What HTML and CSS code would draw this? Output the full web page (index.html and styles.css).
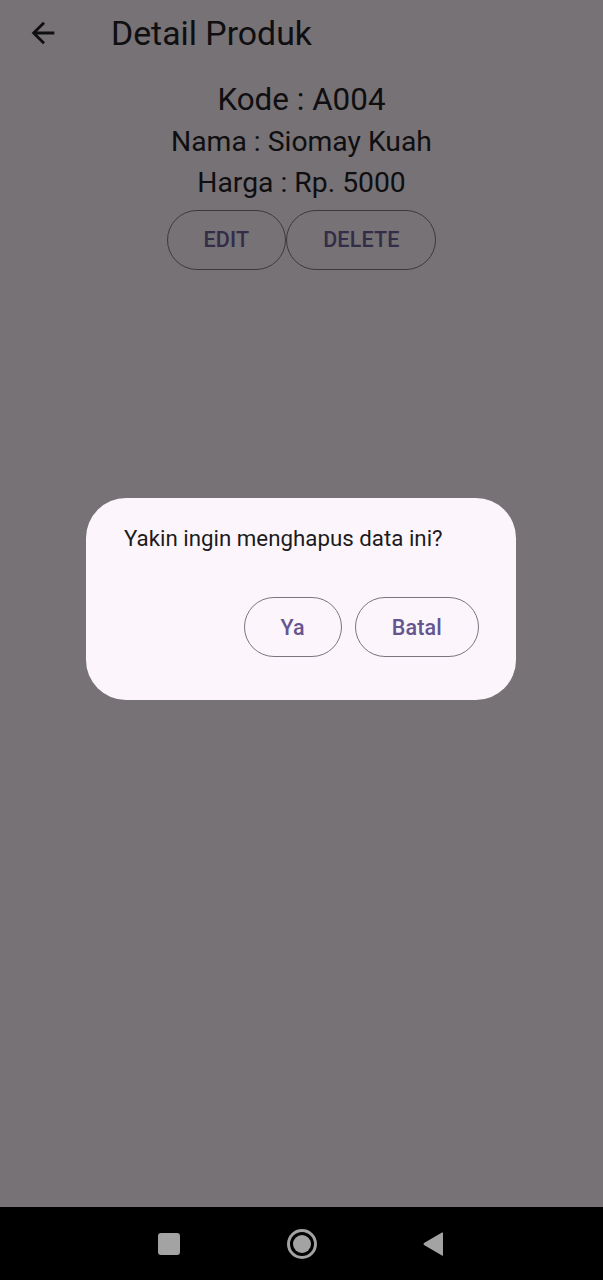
FILE: index.html
```html
<!DOCTYPE html>
<html>
<head>
<meta charset="utf-8">
<link rel="stylesheet" href="styles.css">
</head>
<body>
<div class="screen">
  <header class="appbar">
    <svg class="back" width="34" height="34" viewBox="0 0 24 24"><path d="M20 11H7.83l5.59-5.59L12 4l-8 8 8 8 1.41-1.41L7.83 13H20v-2z" fill="#0f0e10"/></svg>
    <h1 class="title">Detail Produk</h1>
  </header>
  <main class="content">
    <p class="line kode">Kode : A004</p>
    <p class="line">Nama : Siomay Kuah</p>
    <p class="line">Harga : Rp. 5000</p>
    <div class="actions">
      <button class="obtn dim">EDIT</button>
      <button class="obtn dim">DELETE</button>
    </div>
  </main>
  <div class="dialog">
    <p class="dialog-text">Yakin ingin menghapus data ini?</p>
    <div class="dialog-actions">
      <button class="obtn light">Ya</button>
      <button class="obtn light">Batal</button>
    </div>
  </div>
  <nav class="navbar">
    <span class="nav-square"></span>
    <svg width="32" height="32" viewBox="0 0 32 32"><circle cx="16" cy="16" r="13.5" fill="none" stroke="#a3a3a3" stroke-width="3"/><circle cx="16" cy="16" r="9" fill="#a3a3a3"/></svg>
    <svg width="24" height="26" viewBox="0 0 24 26"><path d="M22 2 L22 24 Q22 25 21 24.4 L3 14 Q2 13 3 12 L21 1.6 Q22 1 22 2Z" fill="#a3a3a3"/></svg>
  </nav>
</div>
</body>
</html>
```
FILE: styles.css
```css
* { box-sizing: border-box; }
html, body { margin: 0; padding: 0; }
body {
  width: 603px;
  height: 1280px;
  font-family: Roboto, "Noto Sans", sans-serif;
  background: #767275;
  overflow: hidden;
}
.screen {
  position: relative;
  width: 603px;
  height: 1280px;
  display: flex;
  flex-direction: column;
}
.appbar {
  height: 66px;
  display: flex;
  align-items: center;
  padding-left: 26px;
  gap: 51px;
}
.back { display: block; }
.title {
  margin: 0;
  font-size: 33.8px;
  font-weight: 400;
  color: #0f0e10;
  letter-spacing: 0;
}
.content {
  flex: 1;
  display: flex;
  flex-direction: column;
  align-items: center;
  padding-top: 13px;
}
.line {
  margin: 0;
  font-size: 28.3px;
  line-height: 41.5px;
  color: #0f0e10;
}
.line.kode { font-size: 31.4px; }
.actions {
  display: flex;
  margin-top: 6px;
}
.obtn {
  height: 60px;
  padding: 0 36px;
  border-radius: 30px;
  background: transparent;
  font-family: Roboto, sans-serif;
  font-size: 21.5px;
  font-weight: 500;
  letter-spacing: 0.15px;
}
.obtn.dim {
  border: 1.5px solid #3c3a3e;
  color: #332d48;
}
.obtn.light {
  border: 1.5px solid #79747e;
  color: #65558f;
}
.dialog {
  position: absolute;
  left: 86px;
  top: 498px;
  width: 430px;
  height: 202px;
  background: #fcf6fc;
  border-radius: 40px;
  padding: 24px 37px 0 38px;
  display: flex;
  flex-direction: column;
}
.dialog-text {
  margin: 0;
  font-size: 22.3px;
  line-height: 32px;
  color: #1d1b20;
}
.dialog-actions {
  display: flex;
  justify-content: flex-end;
  gap: 13px;
  margin-top: 43px;
}
.navbar {
  height: 73px;
  background: #000;
  display: flex;
  align-items: center;
  justify-content: center;
}
.navbar > * { flex: none; }
.nav-square {
  width: 22px;
  height: 22px;
  border-radius: 3px;
  background: #a3a3a3;
  margin-right: 106px;
}
.navbar svg:nth-of-type(1) { margin-right: 103px; }
```
